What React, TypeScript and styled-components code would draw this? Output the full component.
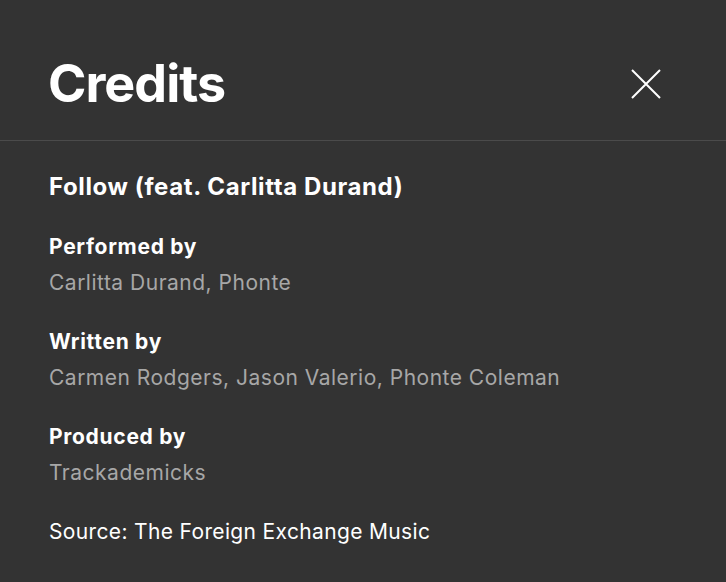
import React from "react";
import styled, { createGlobalStyle } from "styled-components";

const Global = createGlobalStyle`
  html, body { margin: 0; padding: 0; background: #333333; }
  body { font-family: Inter, "Noto Sans", sans-serif; -webkit-font-smoothing: antialiased; }
`;

const Dialog = styled.div`
  width: 726px;
  height: 582px;
  background: #333333;
  color: #ffffff;
  display: flex;
  flex-direction: column;
`;

const Header = styled.header`
  height: 141px;
  box-sizing: border-box;
  border-bottom: 1px solid #4b4b4b;
  display: flex;
  align-items: center;
  justify-content: space-between;
  padding: 27px 64px 0 48px;
`;

const Title = styled.h1`
  margin: 0;
  font-size: 52px;
  font-weight: 700;
  letter-spacing: -1px;
  line-height: 1;
`;

const Close = styled.button`
  background: none;
  border: none;
  padding: 0;
  width: 32px;
  height: 32px;
  display: flex;
  align-items: center;
  justify-content: center;
  cursor: pointer;
`;

const Body = styled.div`
  padding: 31px 49px 0;
  display: flex;
  flex-direction: column;
`;

const Track = styled.h2`
  margin: 0 0 27px;
  font-size: 24px;
  font-weight: 700;
  letter-spacing: 0.6px;
  line-height: 30px;
`;

const Group = styled.section`
  display: flex;
  flex-direction: column;
  margin-bottom: 23px;
`;

const Label = styled.div`
  font-size: 21px;
  font-weight: 700;
  letter-spacing: 0.7px;
  line-height: 36px;
`;

const Value = styled.div`
  font-size: 21px;
  font-weight: 400;
  letter-spacing: 0.5px;
  line-height: 36px;
  color: #a7a7a7;
`;

const Source = styled.div`
  font-size: 21px;
  letter-spacing: 0.35px;
  line-height: 36px;
  color: #ffffff;
`;

const groups = [
  { label: "Performed by", value: "Carlitta Durand, Phonte" },
  { label: "Written by", value: "Carmen Rodgers, Jason Valerio, Phonte Coleman" },
  { label: "Produced by", value: "Trackademicks" },
];

export default function App() {
  return (
    <Dialog>
      <Global />
      <Header>
        <Title>Credits</Title>
        <Close aria-label="Close">
          <svg width="30" height="30" viewBox="0 0 30 30">
            <path d="M1 1 L29 29 M29 1 L1 29" stroke="#fff" strokeWidth="2" />
          </svg>
        </Close>
      </Header>
      <Body>
        <Track>Follow (feat. Carlitta Durand)</Track>
        {groups.map((g) => (
          <Group key={g.label}>
            <Label>{g.label}</Label>
            <Value>{g.value}</Value>
          </Group>
        ))}
        <Source>Source: The Foreign Exchange Music</Source>
      </Body>
    </Dialog>
  );
}
